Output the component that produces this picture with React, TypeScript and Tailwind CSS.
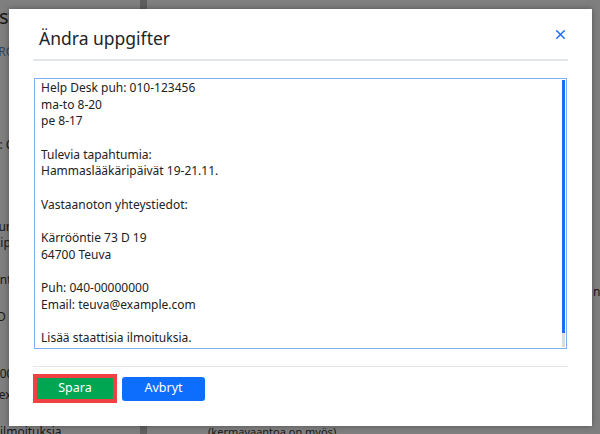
import { X } from "lucide-react";

const NOTICE_TEXT = `Help Desk puh: 010-123456
ma-to 8-20
pe 8-17

Tulevia tapahtumia:
Hammaslääkäripäivät 19-21.11.

Vastaanoton yhteystiedot:

Kärrööntie 73 D 19
64700 Teuva

Puh: 040-00000000
Email: teuva@example.com

Lisää staattisia ilmoituksia.`;

function BackgroundPage() {
  return (
    <div className="flex h-full text-[12px] leading-[16px] text-[#333]">
      {/* left column, mostly hidden under the modal */}
      <div className="w-[140px] shrink-0 flex flex-col whitespace-nowrap">
        <div className="mt-[3px] ml-[-22px] text-[20px] leading-[28px]">Testi</div>
        <div className="mt-[13px] ml-[-9px] text-[#5b8fc7]">PROFIILI</div>
        <div className="mt-[77px] ml-[-27px]">Nimi: Clinic</div>
        <div className="mt-[66px] ml-[-9px]">Kurssit</div>
        <div className="ml-[-6px]">Lipas</div>
        <div className="mt-[21px] ml-[-15px]">Kuntoutus</div>
        <div className="mt-[21px] ml-[-7px]">ID</div>
        <div className="mt-[41px] ml-[-14px]">1000</div>
        <div className="mt-[5px] ml-[-7px]">Texti</div>
        <div className="mt-[21px]">ilmoituksia</div>
      </div>
      <div className="w-[7px] shrink-0 bg-[#bebebe]" />
      <div className="flex-1 min-w-0 flex flex-col whitespace-nowrap">
        <div className="mt-[284px] pl-[446px]">nyt</div>
        <div className="mt-[124px] pl-[61px] text-[11px]">(kermavaantoa on myös)</div>
      </div>
    </div>
  );
}

export default function App() {
  return (
    <div className="relative w-[600px] h-[434px] overflow-hidden bg-white font-['Noto_Sans',sans-serif]">
      <BackgroundPage />
      <div className="absolute inset-0 bg-black/50" />

      {/* Modal */}
      <div className="absolute left-[9px] top-[9px] w-[583px] h-[417px] bg-white shadow-[0_0_6px_rgba(0,0,0,0.35)] px-[24px] flex flex-col">
        <div className="flex items-start justify-between pt-[15px] pb-[7px] border-b-2 border-[#e3e6e9]">
          <h2 className="pl-[6px] text-[17.5px] leading-[28px] text-[#212529]">Ändra uppgifter</h2>
          <button className="mt-[3px] text-[#1a6ef5]">
            <X size={15} strokeWidth={2.4} />
          </button>
        </div>

        <div className="mt-[17px] mx-[1px] h-[271px] border border-[#7fb0f5] flex">
          <div className="flex-1 pl-[6px] pt-[1px] text-[12px] leading-[16.67px] text-[#222] whitespace-pre">
            {NOTICE_TEXT}
          </div>
          <div className="w-[3px] mr-[1px] py-[1px] flex flex-col">
            <div className="flex-1 bg-[#1a6ef5]" />
            <div className="h-[14px] bg-[#dcdcdc]" />
          </div>
        </div>

        <div className="mt-[17px] border-t border-[#e3e6e9] pt-[7px] flex items-center gap-[5px]">
          <button className="w-[84px] h-[29px] border-4 border-[#f04242] bg-[#00a651] text-white text-[12.5px]">
            Spara
          </button>
          <button className="w-[83px] h-[24px] rounded-[3px] bg-[#0d6efd] text-white text-[12.5px]">
            Avbryt
          </button>
        </div>
      </div>
    </div>
  );
}
